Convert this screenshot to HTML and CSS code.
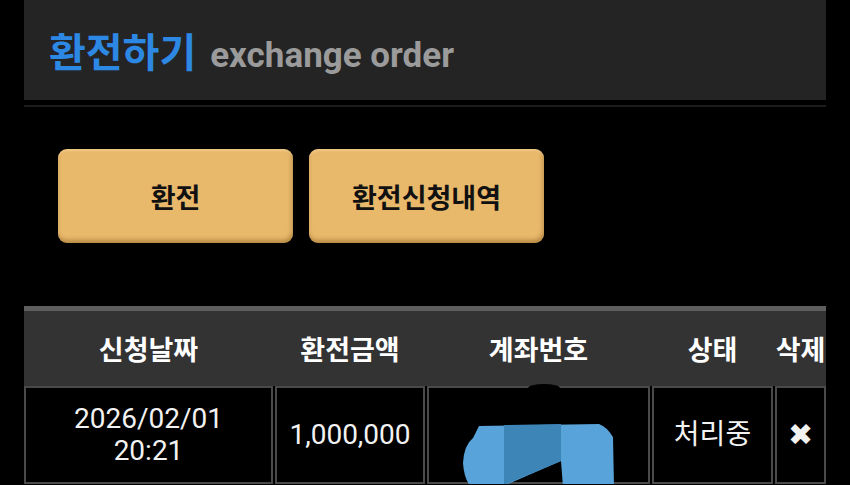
FILE: index.html
```html
<!DOCTYPE html>
<html lang="ko">
<head>
<meta charset="utf-8">
<title>환전하기</title>
<link rel="stylesheet" href="styles.css">
</head>
<body>

<div class="page">
<!-- 상단 제목 -->
<div class="title-bar">
<h1 class="title">환전하기<span class="title-sub">exchange order</span></h1>
</div>
<div class="title-line"></div>

<!-- 탭 버튼 -->
<div class="tab-buttons">
<button class="tab-btn">환전</button>
<button class="tab-btn">환전신청내역</button>
</div>

<!-- 신청 내역 -->
<div class="history">
<div class="history-head">
<div>신청날짜</div>
<div>환전금액</div>
<div>계좌번호</div>
<div>상태</div>
<div>삭제</div>
</div>
<div class="history-row">
<div class="cell">2026/02/01<br>20:21</div>
<div class="cell">1,000,000</div>
<div class="cell account">
<svg class="account-mask" width="160" height="104" viewBox="0 0 160 104">
<ellipse cx="83" cy="5" rx="16" ry="4" fill="#000"/>
<path d="M18,43 L138,41 Q146,44 152,54 L153,104 L102,104 L100,78 L40,104 L10,104 Q3,96 2,80 Q3,62 12,55 Z" fill="#58a4da"/>
<path d="M43,42 L100,41 L100,78 L43,102 Z" fill="#3d84b7"/>
</svg>
</div>
<div class="cell status">처리중</div>
<div class="cell"><span class="del">✖</span></div>
</div>
</div>
</div>

</body>
</html>
```

FILE: styles.css
```css
:root {
--bar: #242424;
--blue: #2d88e4;
--btn: #e8b86b;
--head: #333333;
--line: #4a4a4a;
}

* {
margin: 0;
padding: 0;
box-sizing: border-box;
}

body {
background: #000;
color: #fff;
font-family: Roboto, "Noto Sans CJK KR", sans-serif;
overflow: hidden;
}

.page {
padding: 0 24px;
}

/* 상단 제목 */
.title-bar {
height: 100px;
background: var(--bar);
display: flex;
align-items: center;
padding-left: 25px;
}

.title {
font-size: 40px;
font-weight: 700;
color: var(--blue);
display: flex;
align-items: baseline;
}

.title-sub {
color: #9b9b9b;
margin-left: 14px;
font-size: 35px;
}

.title-line {
height: 2px;
margin-top: 5px;
background: #1d1d1d;
}

/* 탭 버튼 */
.tab-buttons {
display: flex;
gap: 16px;
padding: 42px 0 0 34px;
}

.tab-btn {
width: 235px;
height: 94px;
background: var(--btn);
border: none;
border-radius: 9px;
font-family: "Noto Sans CJK KR", sans-serif;
font-size: 27px;
font-weight: 700;
color: #111;
box-shadow: inset -1px -3px 4px rgba(120, 80, 20, 0.45), inset 0 2px 2px rgba(255, 230, 180, 0.4), 0 2px 3px rgba(0, 0, 0, 0.6);
}

/* 신청 내역 */
.history {
margin-top: 63px;
overflow: hidden;
}

.history-head,
.history-row {
display: grid;
grid-template-columns: 249px 150px 223px 121px 51px;
column-gap: 2px;
}

.history-head {
height: 80px;
background: var(--head);
border-top: 5px solid #5e5e5e;
align-items: center;
font-size: 27px;
font-weight: 700;
text-align: center;
white-space: nowrap;
}

.history-row {
height: 98px;
}

.cell {
border: 2px solid var(--line);
display: flex;
align-items: center;
justify-content: center;
text-align: center;
font-size: 28px;
line-height: 32px;
color: #f2f2f2;
}

.account {
position: relative;
}

.account-mask {
position: absolute;
left: 32px;
top: -5px;
}

.status {
font-size: 28px;
}

.del {
font-family: "DejaVu Sans", sans-serif;
font-size: 30px;
font-weight: 700;
}
```
